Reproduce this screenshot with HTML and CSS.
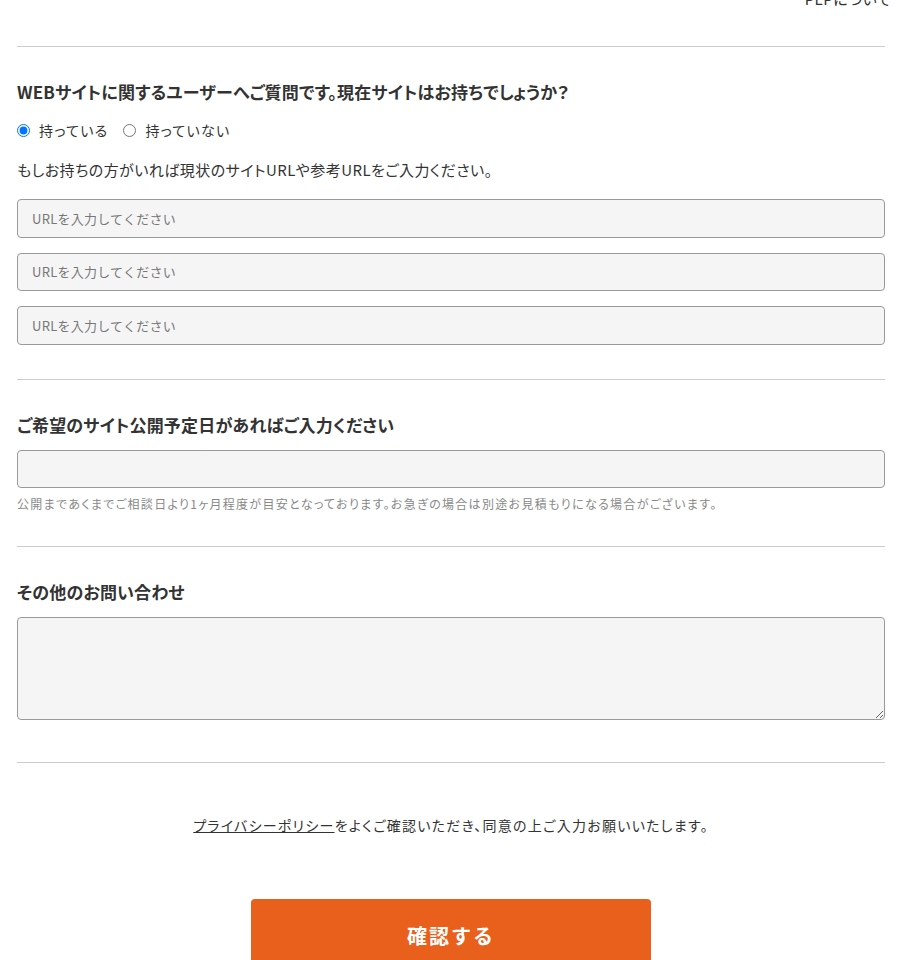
FILE: index.html
```html
<!DOCTYPE html>
<html lang="ja">
<head>
  <meta charset="UTF-8">
  <meta name="viewport" content="width=device-width, initial-scale=1.0">
  <title>お問い合わせ</title>
  <link rel="stylesheet" href="styles.css">
</head>
<body>

  <div class="topnav"><a href="#">PLPについて</a></div>

  <form class="form">
    <div class="field field-site">
      <h2 class="field-title">WEBサイトに関するユーザーへご質問です。現在サイトはお持ちでしょうか？</h2>
      <div class="radios">
        <label><input type="radio" name="site" checked> 持っている</label>
        <label><input type="radio" name="site"> 持っていない</label>
      </div>
      <p class="field-desc">もしお持ちの方がいれば現状のサイトURLや参考URLをご入力ください。</p>
      <div class="inputs">
        <input type="text" class="text-input" placeholder="URLを入力してください">
        <input type="text" class="text-input" placeholder="URLを入力してください">
        <input type="text" class="text-input" placeholder="URLを入力してください">
      </div>
    </div>

    <div class="field field-date">
      <h2 class="field-title">ご希望のサイト公開予定日があればご入力ください</h2>
      <input type="text" class="text-input">
      <p class="field-note">公開まであくまでご相談日より1ヶ月程度が目安となっております。お急ぎの場合は別途お見積もりになる場合がございます。</p>
    </div>

    <div class="field field-other">
      <h2 class="field-title">その他のお問い合わせ</h2>
      <textarea class="text-area"></textarea>
    </div>

    <p class="privacy"><a href="#">プライバシーポリシー</a>をよくご確認いただき、同意の上ご入力お願いいたします。</p>

    <div class="submit-wrap">
      <button type="button" class="submit">確認する</button>
    </div>
  </form>

</body>
</html>
```

FILE: styles.css
```css
body {
  margin: 0;
  font-family: "Noto Sans CJK JP", "Noto Sans", sans-serif;
  color: #333;
  background: #fff;
  font-feature-settings: "palt";
}

.topnav {
  height: 60px;
  margin-top: -14px;
  padding-right: 32px;
  text-align: right;
  font-size: 15px;
  line-height: 26px;
  letter-spacing: 0.03em;
}

.topnav a {
  color: #333;
  text-decoration: none;
}

.form {
  width: 868px;
  margin-left: 17px;
}

.field {
  border-top: 1px solid #ccc;
  padding: 32px 0 35px;
}

.field-site {
  padding-bottom: 34px;
}

.field-title {
  margin: 0 0 12px;
  font-size: 17px;
  line-height: 26px;
  font-weight: bold;
  letter-spacing: 0.01em;
}

.radios {
  display: flex;
  gap: 15px;
  margin-top: 14px;
  font-size: 14px;
  line-height: 22px;
  letter-spacing: 0.09em;
}

.radios label {
  display: flex;
  align-items: center;
  gap: 6px;
}

.radios input {
  margin: 0 3px 0 0;
  width: 13px;
  height: 13px;
}

.field-desc {
  margin: 18px 0 18px;
  font-size: 15px;
  line-height: 22px;
  letter-spacing: 0.03em;
}

.inputs {
  display: flex;
  flex-direction: column;
  gap: 15px;
}

.text-input {
  display: block;
  box-sizing: border-box;
  width: 100%;
  height: 38.5px;
  padding: 0 14px;
  border: 1px solid #9a9a9a;
  border-radius: 4px;
  background: #f5f5f5;
  font-family: inherit;
  font-size: 13px;
  letter-spacing: 0.02em;
  color: #333;
}

.text-input::placeholder {
  color: #777;
}

.field-date {
  padding-bottom: 33px;
}

.field-note {
  margin: 7px 0 0;
  font-size: 12px;
  line-height: 18px;
  color: #888;
  letter-spacing: 0.11em;
}

.field-other {
  padding-bottom: 42px;
}

.text-area {
  display: block;
  box-sizing: border-box;
  width: 100%;
  height: 103px;
  border: 1px solid #9a9a9a;
  border-radius: 4px;
  background: #f5f5f5;
  font-family: inherit;
  font-size: 14px;
}

.privacy {
  margin: 0;
  padding: 51px 0 63px;
  border-top: 1px solid #ccc;
  text-align: center;
  font-size: 14px;
  line-height: 22px;
  letter-spacing: 0.09em;
}

.privacy a {
  color: #333;
}

.submit-wrap {
  text-align: center;
}

.submit {
  width: 400px;
  height: 72px;
  border: none;
  border-radius: 4px;
  background: #e8601c;
  color: #fff;
  font-family: inherit;
  font-size: 20px;
  font-weight: bold;
  letter-spacing: 0.1em;
  cursor: pointer;
}
```
